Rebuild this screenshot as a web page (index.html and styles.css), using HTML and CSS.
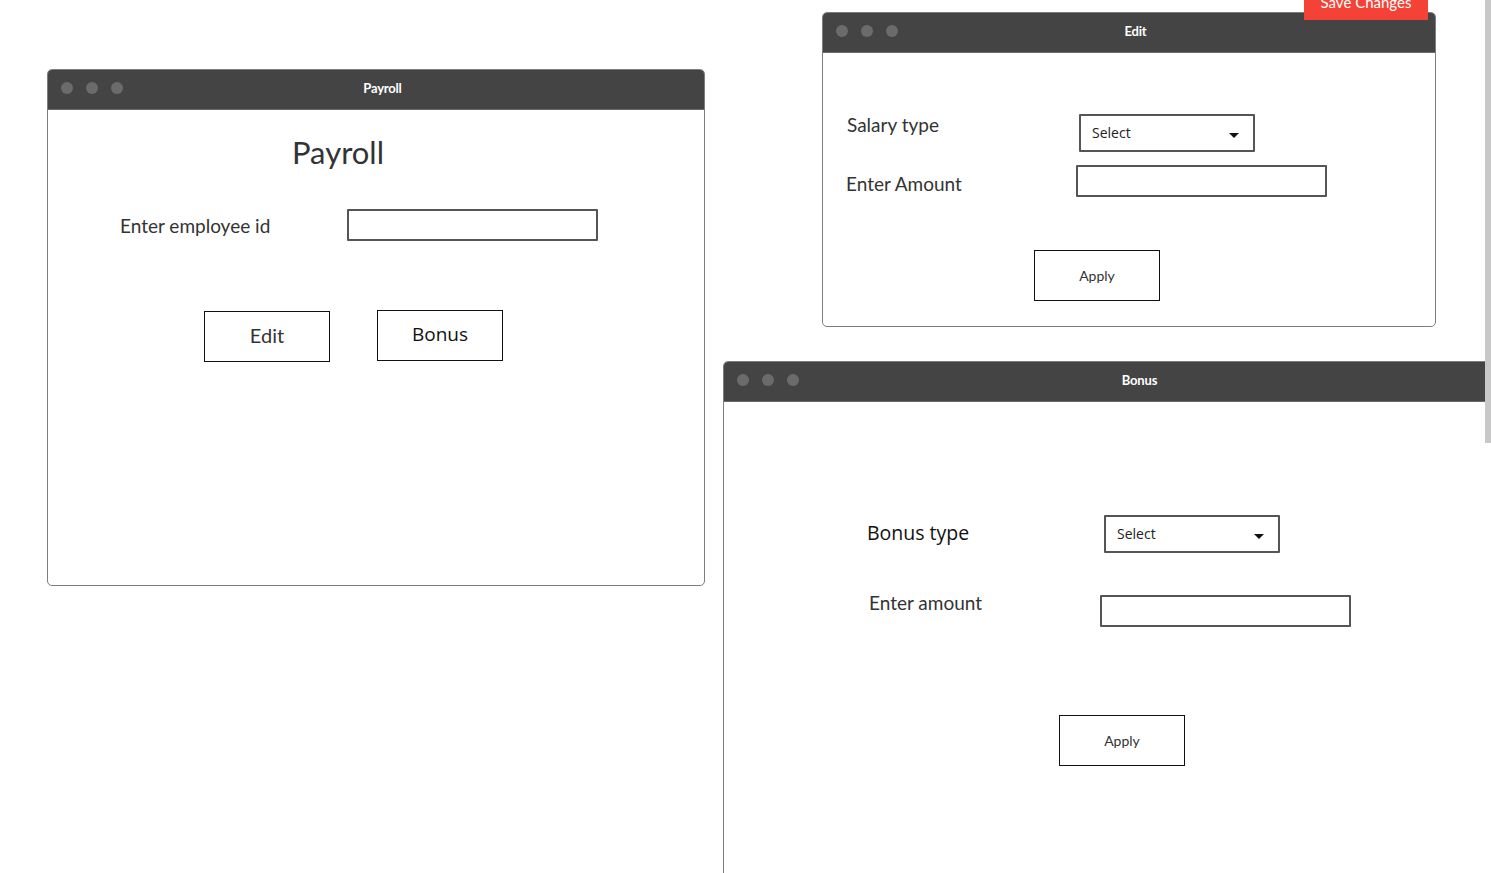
FILE: index.html
```html
<!DOCTYPE html>
<html lang="en">
<head>
<meta charset="utf-8">
<title>Payroll wireframe</title>
<link rel="stylesheet" href="styles.css">
</head>
<body>
<div class="canvas">

  <section class="win win-payroll">
    <header class="titlebar">
      <span class="dots"><i></i><i></i><i></i></span>
      <span class="wtitle">Payroll</span>
    </header>
    <div class="body payroll-body">
      <h1 class="heading">Payroll</h1>
      <div class="row emp-row">
        <span class="label">Enter employee id</span>
        <span class="input emp-input"></span>
      </div>
      <div class="btn-row">
        <span class="btn btn-edit">Edit</span>
        <span class="btn btn-bonus">Bonus</span>
      </div>
    </div>
  </section>

  <section class="win win-edit">
    <header class="titlebar">
      <span class="dots"><i></i><i></i><i></i></span>
      <span class="wtitle">Edit</span>
    </header>
    <div class="body edit-body">
      <div class="row salary-row">
        <span class="label">Salary type</span>
        <span class="select">Select<b class="caret"></b></span>
      </div>
      <div class="row amount-row">
        <span class="label">Enter Amount</span>
        <span class="input"></span>
      </div>
      <div class="apply-wrap">
        <span class="btn btn-apply">Apply</span>
      </div>
    </div>
  </section>

  <span class="save-btn">Save Changes</span>

  <section class="win win-bonus">
    <header class="titlebar">
      <span class="dots"><i></i><i></i><i></i></span>
      <span class="wtitle">Bonus</span>
    </header>
    <div class="body bonus-body">
      <div class="row btype-row">
        <span class="label label-dark">Bonus type</span>
        <span class="select">Select<b class="caret"></b></span>
      </div>
      <div class="row bamount-row">
        <span class="label">Enter amount</span>
        <span class="input"></span>
      </div>
      <div class="apply-wrap bonus-apply">
        <span class="btn btn-apply">Apply</span>
      </div>
    </div>
  </section>

  <div class="scrollbar"></div>
</div>
</body>
</html>
```

FILE: styles.css
```css
* { box-sizing: border-box; }
html, body {
  margin: 0;
  padding: 0;
  background: #fff;
  overflow: hidden;
}
body {
  font-family: Lato, "Open Sans", sans-serif;
  color: #333;
}
.canvas {
  position: relative;
  width: 1491px;
  height: 873px;
  overflow: hidden;
}

/* windows on the canvas */
.win {
  position: absolute;
  background: #fff;
  border: 1px solid #7d7d7d;
  border-radius: 5px;
  overflow: hidden;
}
.win-payroll { left: 47px; top: 69px; width: 658px; height: 517px; }
.win-edit { left: 822px; top: 12px; width: 614px; height: 315px; }
.win-bonus { left: 723px; top: 361px; width: 820px; height: 560px; }

.titlebar {
  height: 40px;
  background: #444;
  display: flex;
  align-items: center;
  position: relative;
  border-bottom: 1px solid #6a6a6a;
  padding-bottom: 4px;
}
.dots {
  display: flex;
  gap: 13px;
  padding-left: 13px;
}
.dots i {
  width: 12px;
  height: 12px;
  border-radius: 50%;
  background: #6b6b6b;
  display: block;
}
.wtitle {
  position: absolute;
  left: 13px;
  right: 0;
  top: 10px;
  text-align: center;
  color: #fff;
  font-weight: 700;
  font-size: 13px;
  letter-spacing: -0.2px;
}

.label {
  font-size: 19px;
  color: #333;
  line-height: 24px;
}
.label-dark {
  color: #111;
  font-family: "Open Sans", sans-serif;
  font-size: 19.5px;
}
.input {
  display: block;
  width: 251px;
  height: 32px;
  border: 2px solid #555;
  border-radius: 1px;
}
.select {
  position: relative;
  display: flex;
  align-items: center;
  width: 176px;
  height: 38px;
  border: 2px solid #555;
  border-radius: 1px;
  padding-left: 11px;
  padding-bottom: 2px;
  font-size: 14px;
  color: #222;
  font-family: "Open Sans", sans-serif;
}
.caret {
  position: absolute;
  right: 14px;
  top: 17px;
  width: 0;
  height: 0;
  border-left: 5px solid transparent;
  border-right: 5px solid transparent;
  border-top: 5px solid #111;
}
.btn {
  display: flex;
  align-items: center;
  justify-content: center;
  width: 126px;
  height: 51px;
  border: 1px solid #111;
  background: #fff;
  padding-bottom: 3px;
}

/* payroll window */
.heading {
  margin: 23px 0 0 244px;
  font-size: 31px;
  font-weight: 400;
  line-height: 38px;
  color: #333;
}
.row { display: flex; align-items: center; }
.emp-row { margin-top: 38px; padding-left: 72px; }
.emp-row .label { width: 227px; margin-top: 2px; }
.btn-row {
  display: flex;
  align-items: flex-start;
  gap: 47px;
  margin-top: 69px;
  padding-left: 156px;
}
.btn-edit { margin-top: 1px; font-size: 20px; color: #333; }
.btn-bonus { font-family: "Open Sans", sans-serif; font-size: 19px; color: #111; }

/* edit window */
.edit-body { padding-left: 24px; }
.salary-row { margin-top: 61px; }
.salary-row .label { width: 232px; margin-top: -16px; }
.amount-row { margin-top: 13px; }
.amount-row .label { width: 230px; margin-top: 5px; margin-left: -1px; }
.apply-wrap { padding-left: 187px; margin-top: 53px; }
.btn-apply { font-size: 14px; color: #333; padding-bottom: 1px; }

/* bonus window */
.bonus-body { padding-left: 143px; }
.btype-row { margin-top: 113px; }
.btype-row .label { width: 237px; margin-top: -3px; }
.bamount-row { margin-top: 42px; }
.bamount-row .label { width: 231px; margin-left: 2px; margin-top: -16px; }
.bonus-apply { padding-left: 192px; margin-top: 88px; }

/* floating red button over edit window */
.save-btn {
  position: absolute;
  left: 1304px;
  top: -14px;
  width: 124px;
  height: 34px;
  background: #f44336;
  color: #fff;
  font-size: 15px;
  display: flex;
  align-items: center;
  justify-content: center;
  padding-bottom: 2px;
}

.scrollbar {
  position: absolute;
  right: 0;
  top: 0;
  width: 6px;
  height: 443px;
  background: #c8c8c8;
}
```
